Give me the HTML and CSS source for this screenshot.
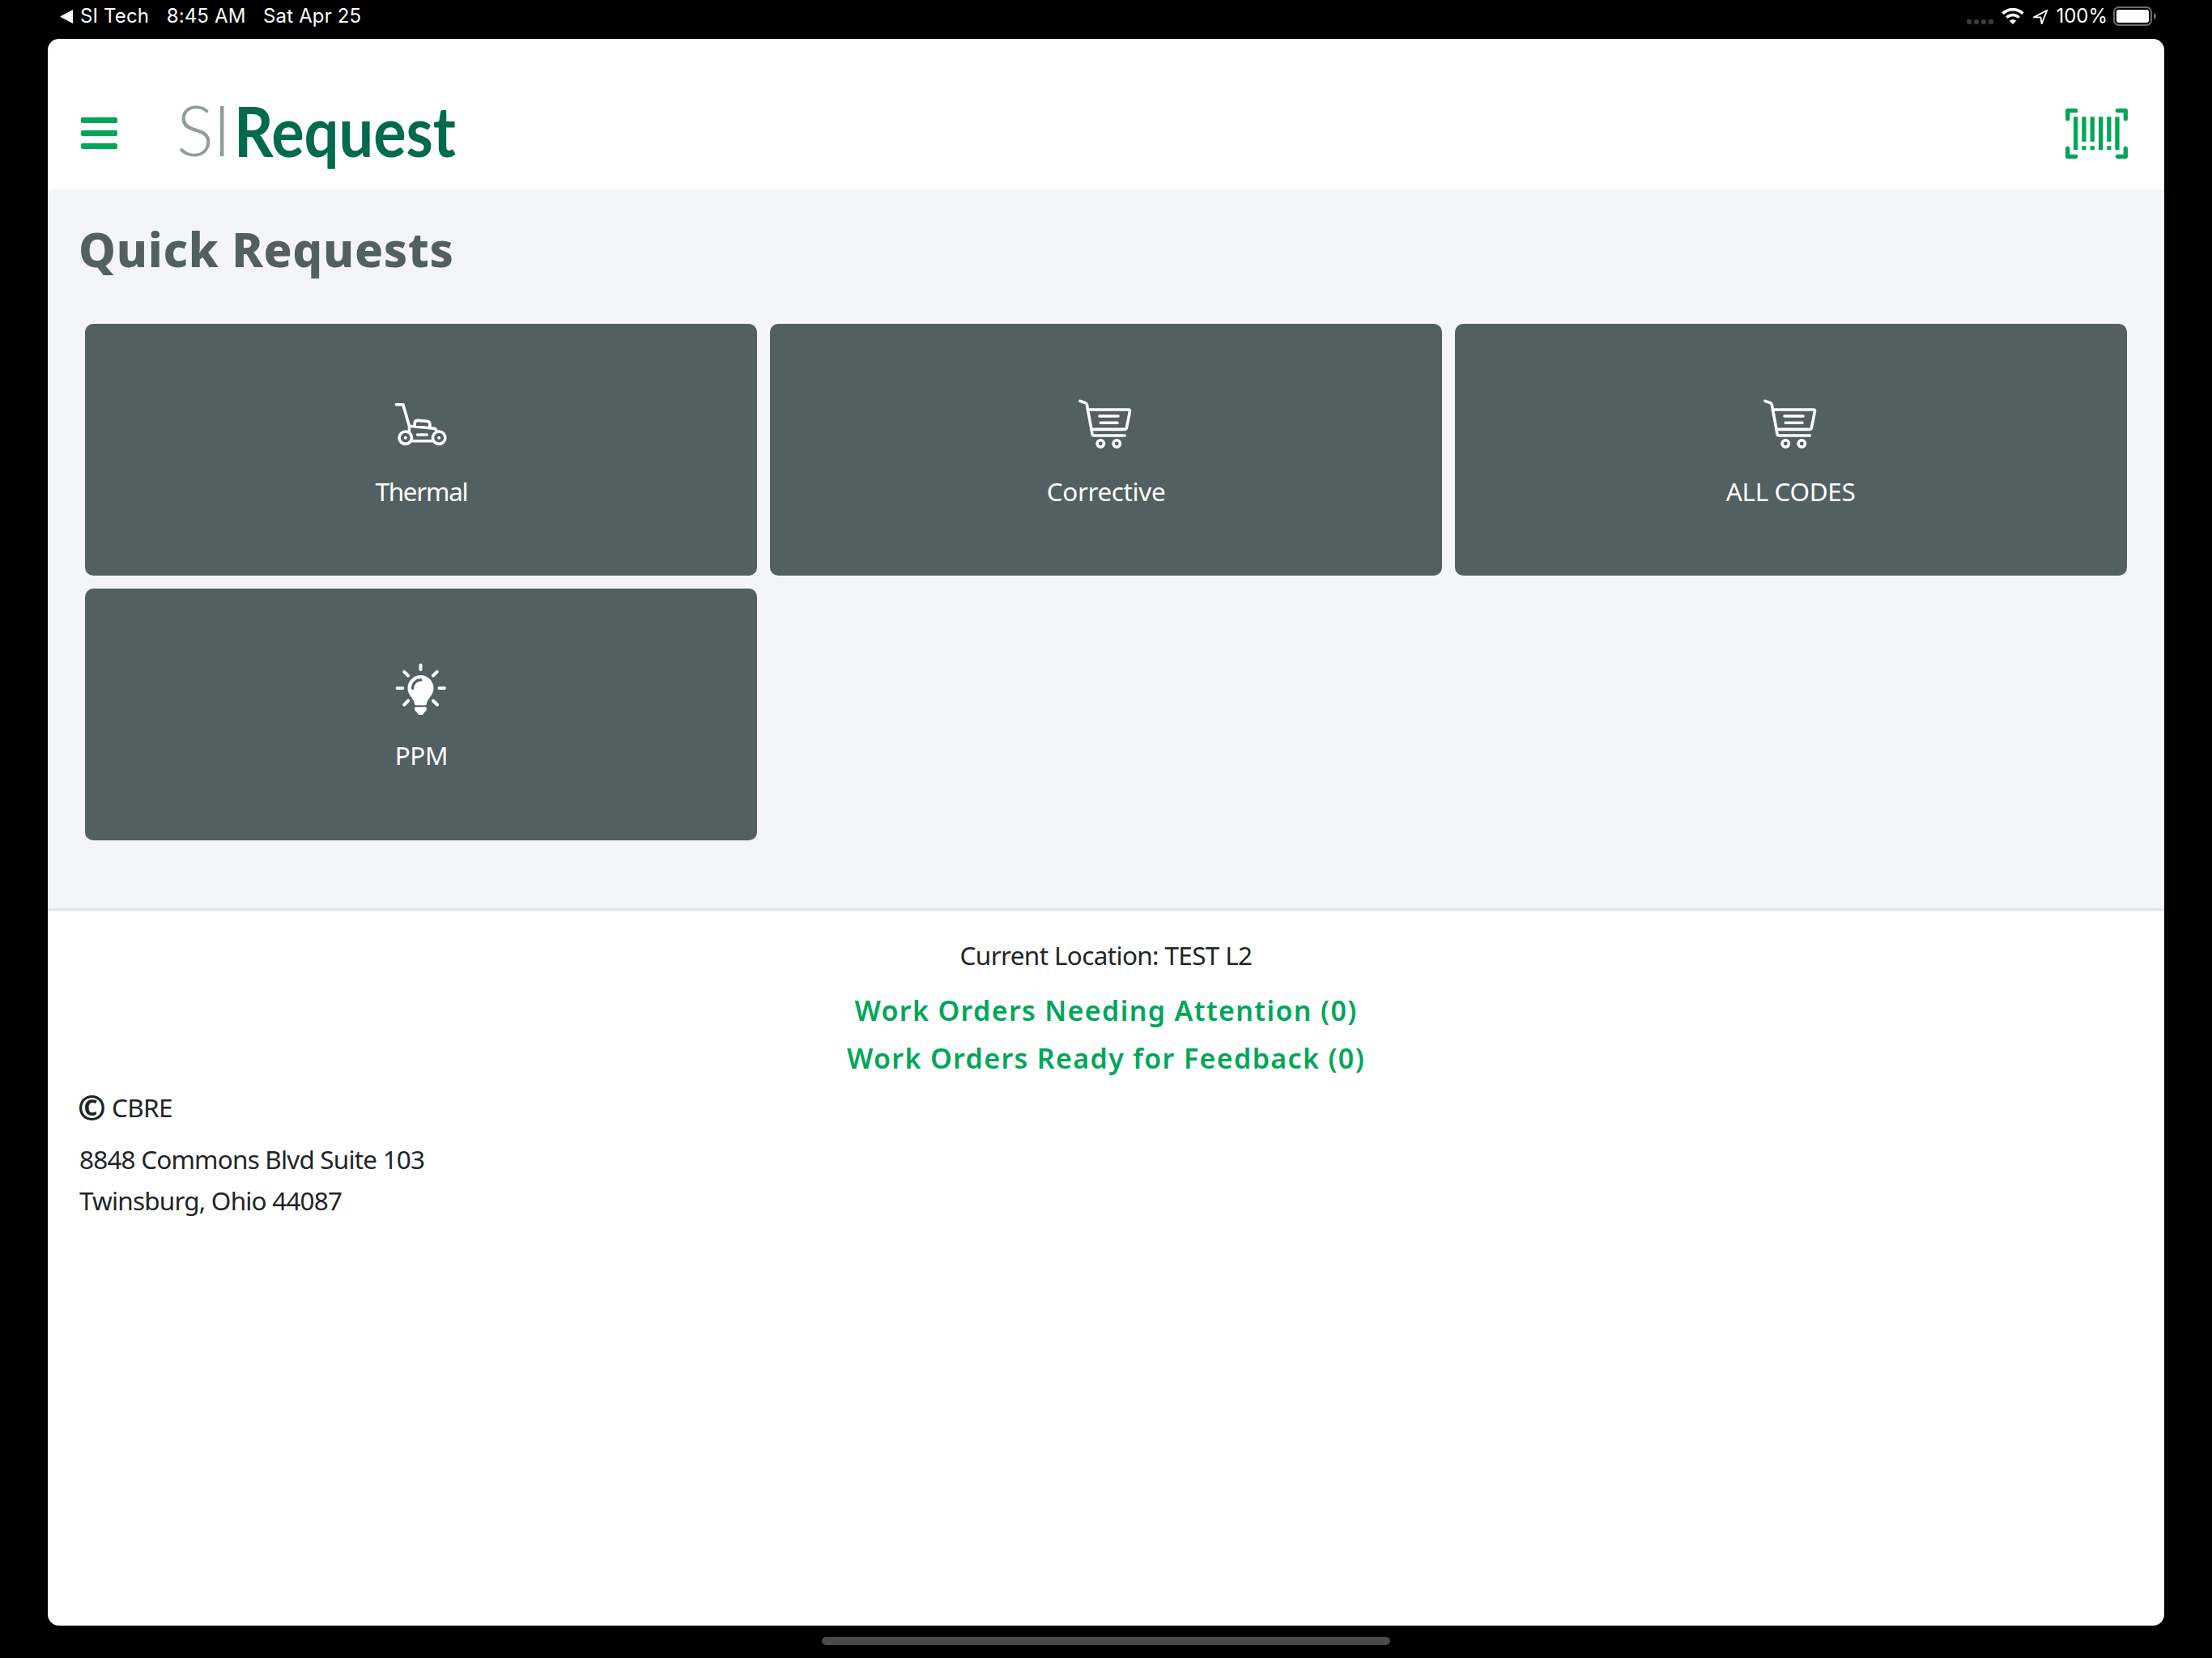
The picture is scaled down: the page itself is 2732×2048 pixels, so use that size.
FILE: index.html
```html
<!DOCTYPE html>
<html lang="en">
<head>
  <meta charset="UTF-8">
  <meta name="viewport" content="width=device-width, initial-scale=1.0">
  <title>SI Request</title>
  <link rel="stylesheet" href="styles.css">
</head>
<body>

  <div class="status-bar">
    <div class="status-left">
      <svg width="16" height="17" viewBox="0 0 16 17"><path d="M0 8.5 16 0v17z" fill="#fff"/></svg>
      <span class="app">SI Tech</span>
      <span class="time">8:45 AM</span>
      <span class="date">Sat Apr 25</span>
    </div>
    <div class="status-right">
      <svg class="dots" width="33" height="6" viewBox="0 0 33 6" fill="#3b3b3b">
        <rect width="6" height="6" rx="2"/>
        <rect x="9" width="6" height="6" rx="2"/>
        <rect x="18" width="6" height="6" rx="2"/>
        <rect x="27" width="6" height="6" rx="2"/>
      </svg>
      <svg width="28" height="20" viewBox="0 0 28 20">
        <path d="M1.6 6.8a17.6 17.6 0 0 1 24.8 0" fill="none" stroke="#fff" stroke-width="3.6"/>
        <path d="M6.3 11.6a11 11 0 0 1 15.4 0" fill="none" stroke="#fff" stroke-width="3.4"/>
        <path d="M14 20l-4.2-4.3a6 6 0 0 1 8.4 0z" fill="#fff"/>
      </svg>
      <svg class="arrow" width="18" height="18" viewBox="0 0 18 18">
        <path d="M1 9.400 17.300.700 10.600 17.300 9.500 9.400z" fill="none" stroke="#fff" stroke-width="1.800" stroke-linejoin="round"/>
      </svg>
      <span class="percent">100%</span>
      <svg width="53" height="24" viewBox="0 0 53 24">
        <rect x="1" y="1" width="46" height="22" rx="6" fill="none" stroke="#6b6b6b" stroke-width="2"/>
        <rect x="4" y="4" width="40" height="16" rx="3" fill="#fff"/>
        <path d="M50 8c4 1.500 4 6.500 0 8z" fill="#6b6b6b"/>
      </svg>
    </div>
  </div>

  <div class="screen">
    <header class="header">
      <div class="menu">
        <span></span>
        <span></span>
        <span></span>
      </div>
      <svg class="logo" width="420" height="138" viewBox="0 -19 420 138">
        <text class="logo-si" x="3" y="78">SI</text>
        <text class="logo-request" x="74" y="78.500" textLength="274" lengthAdjust="spacingAndGlyphs">Request</text>
      </svg>
      <svg class="barcode" width="77" height="62" viewBox="0 0 77 62">
        <g fill="none" stroke="#00a657" stroke-width="5.300" stroke-linecap="round" stroke-linejoin="round">
          <path d="M2.700 12.700v-10h10"/>
          <path d="M64.300 2.700h10v10"/>
          <path d="M2.700 49.300v10h10"/>
          <path d="M64.300 59.300h10v-10"/>
        </g>
        <path d="M10 10.300h5.300v41H10zM20.300 10.300h5.300v30.700h-5.300zM30.600 10.300h5.300v30.700h-5.300zM41 10.300h5.300v41H41zM51.200 10.300h5.300v30.700h-5.300zM61.300 10.300h5.300v41h-5.300zM20.300 46.300h5.300v5h-5.300zM30.600 46.300h5.300v5h-5.300zM51.200 46.300h5.300v5h-5.300z" fill="#00a657"/>
      </svg>
    </header>

    <section class="quick">
      <h1>Quick Requests</h1>
      <div class="cards">
        <div class="card">
          <svg class="icon" viewBox="0 0 64 64">
            <path d="M1.400 7.700h8.400l7.700 26.700v6M17.500 34.200l30.500 3.100q2.500.3 3 3M24.200 34v-3.200q.3-3.500 4-3.400l10.600.9q4 .3 4.200 3.700v4.800M21.500 52.700h25"/>
            <path d="M27.700 45h11.600"/>
            <circle cx="12.800" cy="48.700" r="7.700"/>
            <circle cx="54.200" cy="48.700" r="7.700"/>
            <circle class="solid" cx="12.800" cy="48.700" r="2"/>
            <circle class="solid" cx="54.200" cy="48.700" r="2"/>
          </svg>
          <span class="thermal">Thermal</span>
        </div>
        <div class="card">
          <svg class="icon" viewBox="0 0 64 64">
            <path d="M0 3.400 6.200 5.500q1.700.7 2.200 2.400L15 44q.3 2 2.500 2h37.800"/>
            <path d="M10 14h49.700q2.200 0 1.700 2.400l-4 20q-.4 2-2.400 2H14.500M24 22h23M25.300 30.300H46"/>
            <circle cx="25.300" cy="56" r="4.200"/>
            <circle cx="45.300" cy="56" r="4.200"/>
          </svg>
          <span>Corrective</span>
        </div>
        <div class="card">
          <svg class="icon" viewBox="0 0 64 64">
            <path d="M0 3.400 6.200 5.500q1.700.7 2.200 2.400L15 44q.3 2 2.500 2h37.800"/>
            <path d="M10 14h49.700q2.200 0 1.700 2.400l-4 20q-.4 2-2.400 2H14.500M24 22h23M25.300 30.300H46"/>
            <circle cx="25.300" cy="56" r="4.200"/>
            <circle cx="45.300" cy="56" r="4.200"/>
          </svg>
          <span>ALL CODES</span>
        </div>
        <div class="card">
          <svg class="icon bulb" viewBox="0 0 64 64">
            <path d="M31.500 2.400v5.600M11.300 10.800l4.800 4.800M51.700 10.800l-4.800 4.800M2.600 31h6.600M54.400 31H61M11.300 51.500l4.800-4.800M52 51.500l-4.900-4.800"/>
            <path class="solid" d="M31.500 15a16 16 0 0 0-16 16c0 9.500 7.500 11.500 8.700 20q.2 1.200 1.300 1.200h12q1.100 0 1.300-1.200c1.200-8.500 8.700-10.500 8.700-20a16 16 0 0 0-16-16zM25.200 54.200h12.600q1 0 1 1v2.300q0 1.500-2 2.500l-2 3q-.5 1-1.600 1h-3.400q-1.100 0-1.600-1l-2-3q-2-1-2-2.500v-2.300q0-1 1-1z"/>
            <path class="shine" d="M21.600 31.300c0-6 4.400-10.400 10.300-10.400"/>
          </svg>
          <span>PPM</span>
        </div>
      </div>
    </section>

    <footer class="footer">
      <p class="location">Current Location: TEST L2</p>
      <a class="orders">Work Orders Needing Attention (0)</a>
      <a class="orders">Work Orders Ready for Feedback (0)</a>
      <p class="company"><span class="copy">©</span>CBRE</p>
      <p class="address">8848 Commons Blvd Suite 103<br>Twinsburg, Ohio 44087</p>
    </footer>
  </div>

  <div class="home-bar"></div>

</body>
</html>
```
FILE: styles.css
```css
* {
  box-sizing: border-box;
}
body {
  margin: 0;
  height: 2048px;
  background: #000;
  font-family: "Noto Sans", sans-serif;
  font-size: 31.500px;
  letter-spacing: -0.650px;
  color: #202526;
}
svg {
  display: block;
  flex: none;
}

/* iPad status bar */
.status-bar {
  display: flex;
  justify-content: space-between;
  height: 48px;
  padding: 0 69px 8px 74px;
  font-family: Inter, sans-serif;
  font-size: 24px;
  line-height: 40px;
  letter-spacing: 0.150px;
  color: #fff;
}
.status-left, .status-right {
  display: flex;
  align-items: center;
}
.app {
  margin-left: 9px;
}
.time, .date {
  margin-left: 21.500px;
}
.dots {
  margin: 14px 10px 0 0;
}
.arrow {
  margin: 2px 10px 0 11px;
}
.percent {
  margin-right: 7px;
  letter-spacing: 0;
}

.screen {
  height: 1960px;
  margin: 0 59px;
  background: #fff;
  border-radius: 14px;
  overflow: hidden;
}
.header {
  display: flex;
  align-items: center;
  height: 186px;
  padding: 47px 45px 0 41px;
}
.menu {
  display: grid;
  gap: 8.300px;
  width: 45px;
}
.menu span {
  height: 7.700px;
  border-radius: 2px;
  background: #00a657;
}
.logo {
  margin-left: 70px;
}
.logo-si {
  font: 300 86px Lato, sans-serif;
  letter-spacing: -1px;
  fill: #929c9d;
}
.logo-request {
  font: 700 86px Lato, sans-serif;
  letter-spacing: 0;
  fill: #006a4d;
}
.barcode {
  margin-left: auto;
}

.quick {
  height: 891px;
  padding: 34px 46.400px 0;
  background: #f4f5fb;
  border-bottom: 3px solid #dfe4ee;
}
h1 {
  margin: 0 0 52.300px -8.400px;
  font-size: 58px;
  font-weight: 800;
  line-height: 80px;
  letter-spacing: 0.700px;
  color: #526061;
}
.cards {
  display: grid;
  grid-template-columns: repeat(3, 1fr);
  gap: 15.500px;
}
.card {
  display: flex;
  flex-direction: column;
  align-items: center;
  height: 311px;
  padding-top: 92px;
  border-radius: 10px;
  background: #526061;
  color: #fff;
}
.card span {
  margin-top: 25.500px;
  line-height: 50px;
  letter-spacing: -0.400px;
}
.card .thermal {
  letter-spacing: -1.300px;
}
.icon {
  width: 64px;
  height: 64px;
  overflow: visible;
  fill: none;
  stroke: #fff;
  stroke-width: 3.600px;
  stroke-linecap: round;
  stroke-linejoin: round;
}
.icon .solid {
  fill: #fff;
  stroke: none;
}
.bulb {
  stroke-width: 4px;
}
.bulb .shine {
  stroke: #526061;
  stroke-width: 3.200px;
}

.footer {
  display: flex;
  flex-direction: column;
  padding: 30px 39px 0;
}
.footer p {
  margin: 0;
}
.location {
  line-height: 50px;
  text-align: center;
}
.orders {
  font-size: 34px;
  font-weight: 600;
  line-height: 59px;
  letter-spacing: 1.350px;
  text-align: center;
  color: #00a657;
}
.location + .orders {
  margin-top: 14px;
}
.footer .company {
  display: flex;
  align-items: center;
  height: 50px;
  margin: 5px 0 14px;
}
.copy {
  width: 42px;
  margin-left: -2px;
  font-size: 42px;
  font-weight: 800;
}
.address {
  line-height: 51px;
  letter-spacing: -0.820px;
}

.home-bar {
  width: 702px;
  height: 10px;
  margin: 14px auto 0;
  border-radius: 5px;
  background: #4a4a4a;
}
```
